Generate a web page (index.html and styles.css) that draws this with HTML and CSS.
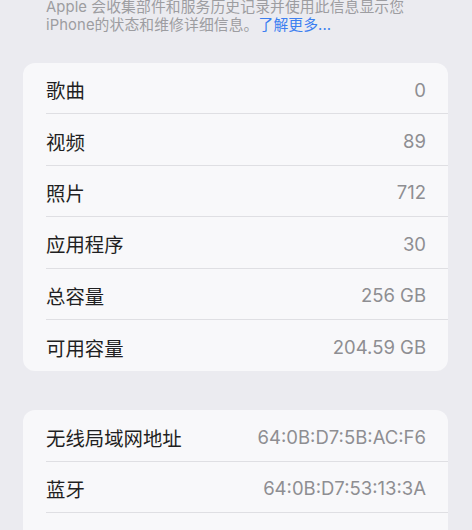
FILE: index.html
```html
<!DOCTYPE html>
<html lang="zh-CN">
<head>
<meta charset="utf-8">
<link rel="stylesheet" href="styles.css">
</head>
<body>
<div class="page">
  <p class="footnote">Apple 会收集部件和服务历史记录并使用此信息显示您<br>iPhone的状态和维修详细信息。<span class="link">了解更多...</span></p>

  <div class="card">
    <div class="row"><span class="label">歌曲</span><span class="value">0</span></div>
    <div class="row"><span class="label">视频</span><span class="value">89</span></div>
    <div class="row"><span class="label">照片</span><span class="value">712</span></div>
    <div class="row"><span class="label">应用程序</span><span class="value">30</span></div>
    <div class="row"><span class="label">总容量</span><span class="value">256 GB</span></div>
    <div class="row"><span class="label">可用容量</span><span class="value">204.59 GB</span></div>
  </div>

  <div class="card card2">
    <div class="row"><span class="label">无线局域网地址</span><span class="value">64:0B:D7:5B:AC:F6</span></div>
    <div class="row"><span class="label">蓝牙</span><span class="value">64:0B:D7:53:13:3A</span></div>
    <div class="row"><span class="label">调制解调器固件</span><span class="value">1.00.00</span></div>
  </div>
</div>
</body>
</html>
```

FILE: styles.css
```css
html, body {
  margin: 0;
  padding: 0;
  background: #ebebf0;
  height: 100%;
  overflow: hidden;
}

.page {
  width: 472px;
  height: 530px;
  padding: 0 24px 0 23px;
  box-sizing: border-box;
  font-family: "Inter", "Noto Sans CJK SC", sans-serif;
}

.footnote {
  margin: -2px 0 0 23px;
  font-family: "Inter", "Noto Sans CJK SC", sans-serif;
  font-size: 14.8px;
  line-height: 18px;
  color: #9d9da1;
  letter-spacing: 0.1px;
}

.link {
  color: #3d7ff0;
}

.card {
  margin-top: 29px;
  background: #f8f8fa;
  border-radius: 12px;
  overflow: hidden;
}

.card2 {
  margin-top: 39px;
}

.row {
  height: 51.4px;
  box-sizing: border-box;
  margin-left: 23px;
  padding: 3px 22px 0 0;
  display: flex;
  align-items: center;
  justify-content: space-between;
  border-bottom: 1px solid #dfdfe3;
}

.row:last-child {
  border-bottom: none;
}

.label {
  font-family: "Noto Sans CJK SC", sans-serif;
  font-size: 19.4px;
  color: #1f1f22;
}

.value {
  font-family: "Inter", "Noto Sans CJK SC", sans-serif;
  font-size: 18.5px;
  color: #8e8e92;
}
```
